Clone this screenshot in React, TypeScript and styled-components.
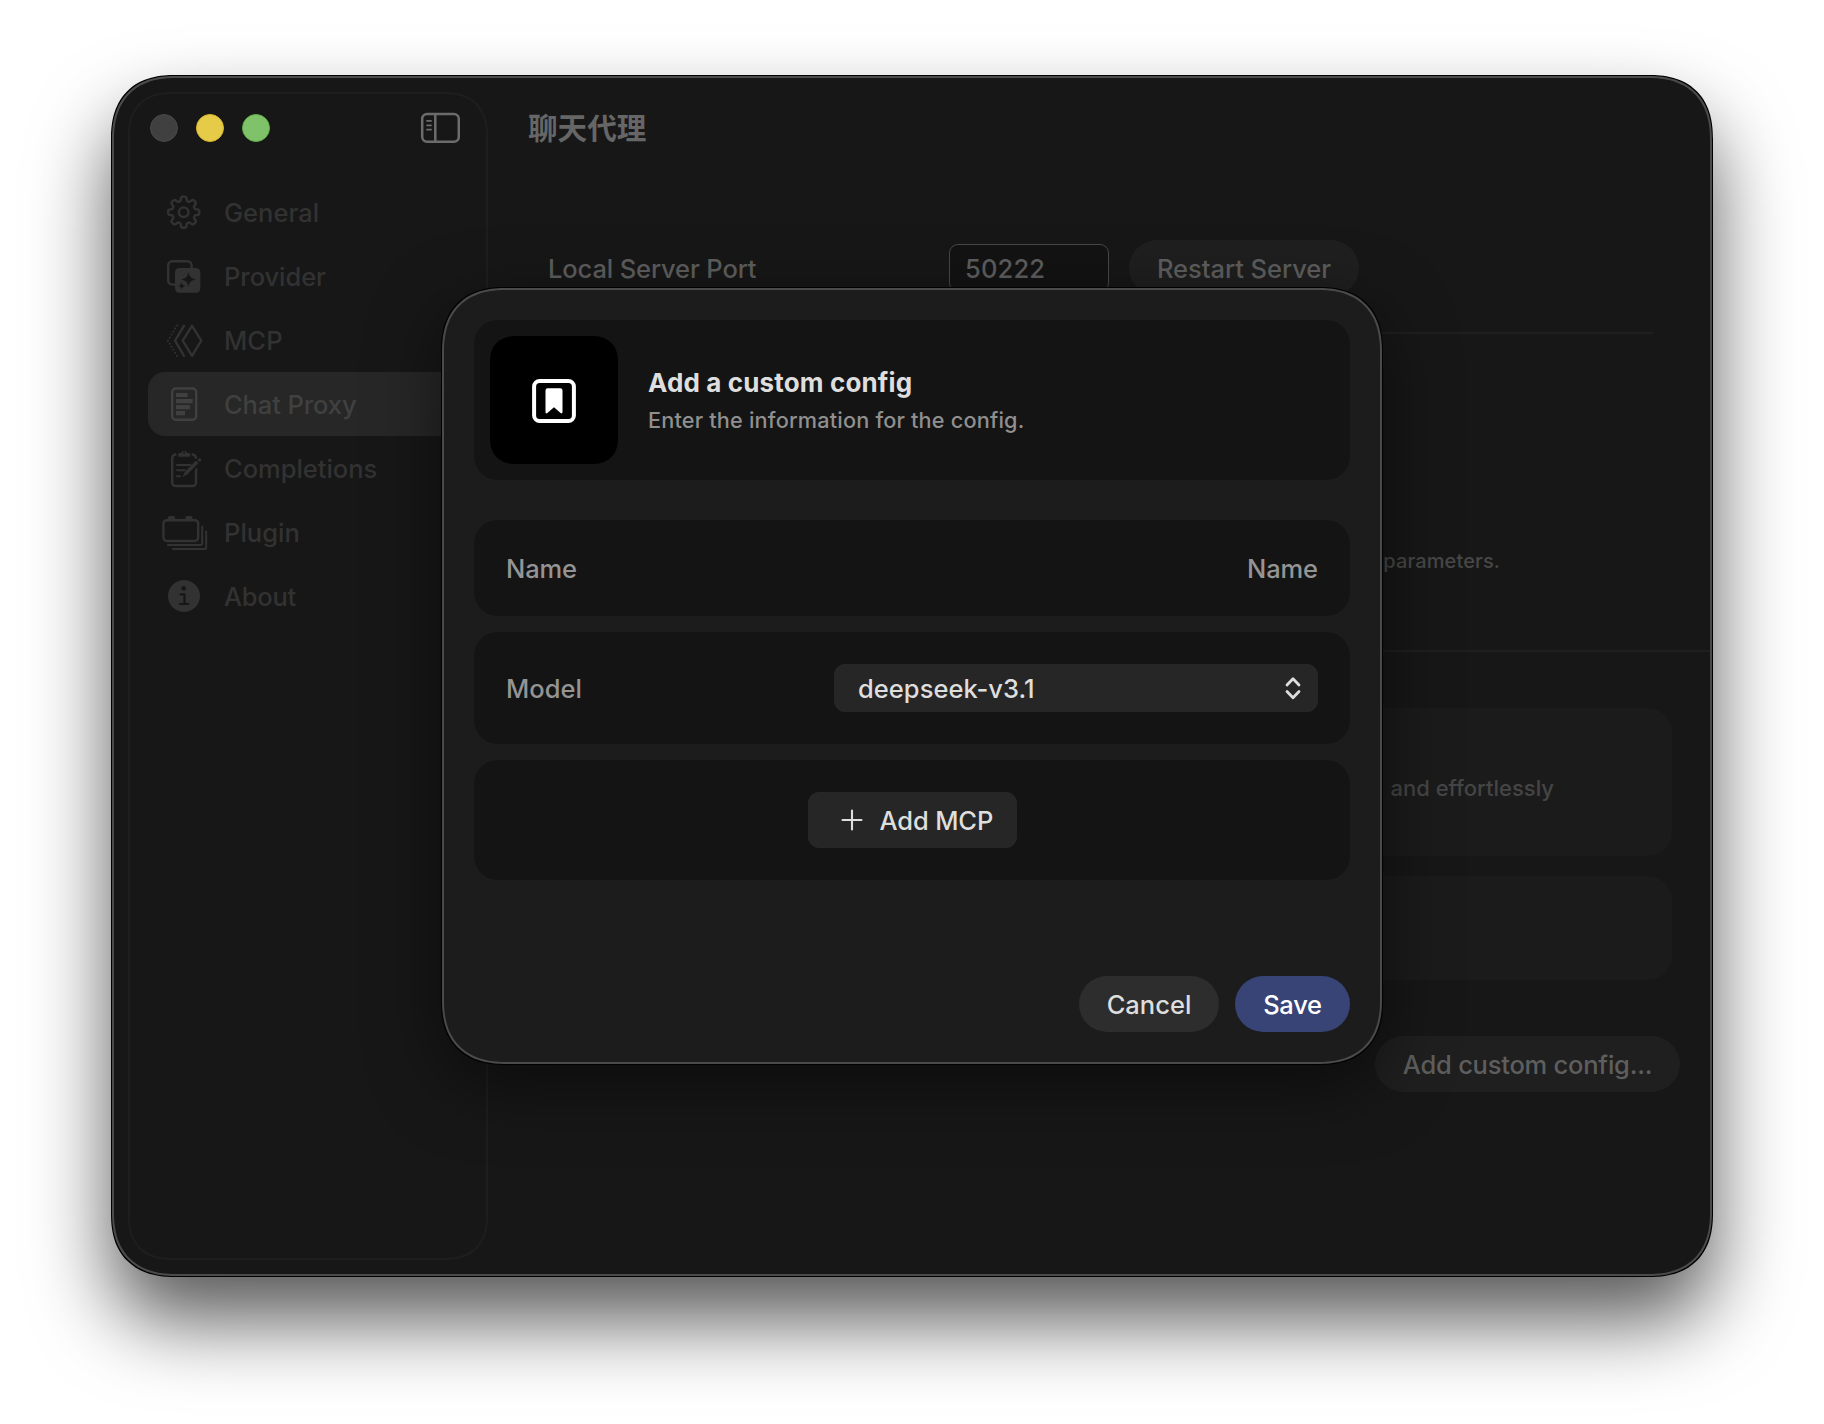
import React from 'react';
import styled, { createGlobalStyle, css } from 'styled-components';

const sans = `Inter, "Noto Sans CJK SC", "Liberation Sans", sans-serif`;

const GlobalStyle = createGlobalStyle`
  *, *::before, *::after { box-sizing: border-box; }
  body { margin: 0; background: #fff; font: 500 25.5px ${sans}; }
`;

const Desktop = styled.div`
  width: 1824px;
  height: 1424px;
  padding: 76px 112px;
  overflow: hidden;
  background: #fff;
`;

const Window = styled.div`
  position: relative;
  display: flex;
  width: 1600px;
  height: 1200px;
  border: 2px solid #4b4b4b;
  border-radius: 64px;
  corner-shape: superellipse(1.25);
  background: #171717;
  box-shadow: 0 0 0 1px #000, 0 44px 80px rgba(0, 0, 0, 0.66);
`;

const Sidebar = styled.aside`
  flex: none;
  width: 360px;
  margin: 14px 0 14px 14px;
  padding: 20px 18px;
  border: 2px solid #1e1e1e;
  border-radius: 44px;
  corner-shape: superellipse(1.25);
`;

const SidebarHeader = styled.div`
  display: flex;
  align-items: center;
  gap: 18px;
  height: 28px;
  padding: 0 8px 0 2px;
  margin-bottom: 38px;
`;

const Light = styled.span<{ $fill: string; $edge: string }>`
  width: 28px;
  height: 28px;
  border-radius: 50%;
  background: ${(p) => p.$fill};
  border: 1px solid ${(p) => p.$edge};
`;

const SidebarToggle = styled.svg`
  display: block;
  width: 40px;
  height: 32px;
  margin-left: auto;
  color: #6c6c6c;
`;

const NavItem = styled.div<{ $active?: boolean }>`
  display: flex;
  align-items: center;
  gap: 16px;
  height: 64px;
  padding-left: 12px;
  border-radius: 17px;
  color: #323232;
  --surface: #171717;
  ${(p) =>
    p.$active &&
    css`
      background: #272727;
      color: #404040;
      --surface: #272727;
    `}
`;

const NavIcon = styled.svg`
  display: block;
  flex: none;
  width: 48px;
  height: 40px;
  overflow: visible;
`;

const Txt = styled.span<{ $ls?: number }>`
  white-space: nowrap;
  letter-spacing: ${(p) => p.$ls ?? 0}px;
`;

const Main = styled.main`
  flex: 1;
  min-width: 0;
  display: flex;
  flex-direction: column;
`;

const Toolbar = styled.header`
  display: flex;
  align-items: center;
  height: 100px;
  padding: 0 0 2px 40px;
  font: 700 29.6px/1 "Noto Sans CJK SC", sans-serif;
  color: #666;
`;

const ServerRow = styled.div`
  display: flex;
  align-items: center;
  height: 56px;
  margin: 62px 0 36px 60px;
  color: #5e5e5e;
`;

const ServerLabel = styled.div`
  width: 401px;
`;

const PortField = styled.div`
  display: flex;
  align-items: center;
  width: 160px;
  height: 48px;
  margin-right: 20px;
  padding-left: 15px;
  border: 1px solid #484848;
  border-radius: 9px;
  background: #131313;
`;

const Pill = styled.button<{ $w: number; $bg: string; $fg: string }>`
  display: flex;
  align-items: center;
  justify-content: center;
  width: ${(p) => p.$w}px;
  height: 56px;
  padding: 0;
  border: 0;
  border-radius: 28px;
  background: ${(p) => p.$bg};
  color: ${(p) => p.$fg};
  font: inherit;
`;

const ShortRule = styled.hr`
  width: 1105px;
  height: 2px;
  margin: 0 0 0 60px;
  border: 0;
  background: #1f1f1f;
`;

const Hint = styled.p`
  display: flex;
  justify-content: flex-end;
  height: 28px;
  margin: 213px 210px 75px 0;
  line-height: 28px;
  font-size: 20px;
  color: #474747;
`;

const FullRule = styled(ShortRule)`
  width: auto;
  margin: 0;
`;

const Panels = styled.div`
  padding-top: 56px;
`;

const Panel = styled.section<{ $h: number }>`
  display: flex;
  align-items: center;
  justify-content: flex-end;
  height: ${(p) => p.$h}px;
  margin: 0 38px 20px 40px;
  padding: 12px 118px 0 0;
  border-radius: 24px;
  background: #1b1b1b;
  font-size: 22px;
  color: #454545;
`;

const MainFooter = styled.div`
  display: flex;
  justify-content: flex-end;
  padding: 36px 30px 0 0;
`;

const Backdrop = styled.div`
  position: absolute;
  inset: -2px;
  display: grid;
  place-items: center;
`;

const Dialog = styled.div`
  display: flex;
  flex-direction: column;
  width: 940px;
  height: 776px;
  padding: 30px;
  border: 2px solid #4a4a4a;
  border-radius: 64px;
  corner-shape: superellipse(1.25);
  background: #1c1c1c;
  box-shadow: 0 0 0 1px #000, 0 20px 70px rgba(0, 0, 0, 0.5);
  color: #949494;
`;

const DialogHeader = styled.header`
  display: flex;
  align-items: center;
  gap: 30px;
  height: 160px;
  margin-bottom: 40px;
  padding-left: 16px;
  border-radius: 24px;
  background: #141414;
`;

const AppIcon = styled.div`
  display: grid;
  place-items: center;
  width: 128px;
  height: 128px;
  padding-top: 1px;
  border-radius: 26px;
  corner-shape: superellipse(1.2);
  background: #000;
  color: #fff;
`;

const Heading = styled.div`
  display: flex;
  flex-direction: column;
  gap: 7px;
  padding-top: 1px;
`;

const Title = styled.h1`
  margin: 0;
  font-size: 26px;
  line-height: 32px;
  font-weight: 700;
  color: #dedede;
`;

const Subtitle = styled.p`
  margin: 0;
  font-size: 21.7px;
  line-height: 28px;
  color: #8f8f8f;
`;

const FieldRow = styled.div<{ $h: number; $center?: boolean }>`
  display: flex;
  align-items: center;
  justify-content: ${(p) => (p.$center ? 'center' : 'space-between')};
  height: ${(p) => p.$h}px;
  margin-bottom: 16px;
  padding: 0 32px;
  border-radius: 24px;
  background: #141414;
`;

const Select = styled.div`
  display: flex;
  align-items: center;
  justify-content: space-between;
  width: 484px;
  height: 48px;
  padding: 0 16px 0 24px;
  border-radius: 11px;
  background: #262626;
  color: #dedede;
`;

const AddButton = styled.button`
  display: flex;
  align-items: center;
  gap: 17px;
  width: 209px;
  height: 56px;
  padding: 0 0 0 33px;
  border: 0;
  border-radius: 11px;
  background: #262626;
  color: #dedede;
  font: inherit;
`;

const DialogActions = styled.footer`
  display: flex;
  justify-content: flex-end;
  gap: 16px;
  margin-top: auto;
`;

const gearPath = (() => {
  const points: string[] = [];
  for (let i = 0; i < 240; i++) {
    const a = (i / 240) * Math.PI * 2;
    const r = 13.5 + 2.1 * Math.tanh(2.2 * Math.cos(8 * a) + 0.3);
    points.push(`${(23.7 + r * Math.sin(a)).toFixed(2)} ${(20.2 - r * Math.cos(a)).toFixed(2)}`);
  }
  return `M${points.join('L')}Z`;
})();

const stroke = {
  fill: 'none',
  stroke: 'currentColor',
  strokeWidth: 2.4,
  strokeLinecap: 'round',
  strokeLinejoin: 'round',
} as const;

const icons: Record<string, React.ReactNode> = {
  General: (
    <g {...stroke}>
      <path d={gearPath} />
      <circle cx="23.7" cy="20.2" r="4.8" />
    </g>
  ),
  Provider: (
    <>
      <path {...stroke} strokeLinecap="butt" d="M16 28.6h-3.6a4.2 4.2 0 0 1-4.2-4.2V9.4a4.2 4.2 0 0 1 4.2-4.2h15a4.2 4.2 0 0 1 4.2 4.2V13" />
      <rect x="15" y="12" width="25.3" height="24.8" rx="4.2" fill="currentColor" />
      <path
        fill="var(--surface)"
        d="M28.5 15.8c.8 5 2.4 6.6 7.3 7.6c-4.9 1-6.5 2.6-7.3 7.6c-.8-5-2.4-6.6-7.3-7.6c4.9-1 6.5-2.6 7.3-7.6zM21.7 26c.5 2.6 1.3 3.4 3.8 3.9c-2.500.5-3.300 1.300-3.800 3.900c-.5-2.600-1.300-3.400-3.800-3.900c2.500-.5 3.300-1.300 3.800-3.900z"
      />
    </>
  ),
  MCP: (
    <g {...stroke}>
      <path d="M32 5.800l9.300 14.900L32 35.800L22.700 20.700z" />
      <path d="M24 5.800L15 20.700l9 15.100" />
      <path d="M17 5.500L7.900 20.700L17 36" strokeWidth="2" strokeDasharray="0 3.540" />
    </g>
  ),
  'Chat Proxy': (
    <>
      <rect {...stroke} x="12.200" y="4.500" width="24" height="31.300" rx="3.600" />
      <path fill="currentColor" d="M16 8.900h11.500v4.200H16zM16 15h16.700v4.200H16zM16 21h14v4.200H16zM16 27.100h9v4.200H16z" />
    </>
  ),
  Completions: (
    <>
      <path {...stroke} d="M15.500 6.500a3.500 3.500 0 0 0-3.300 3.600v24.600a3.300 3.300 0 0 0 3.300 3.300h17.200a3.300 3.300 0 0 0 3.300-3.300V20M32.600 6.500c1.900.3 3 1.400 3.300 3.300" />
      <path {...stroke} strokeWidth={1.900} d="M17 17h13.500M17 22.300h8M17 28.300h3" />
      <path fill="currentColor" d="M18.200 6.500a1.500 1.500 0 0 1 1.500-1.500h1.500a3.100 3.100 0 0 1 6 0h1.500a1.500 1.500 0 0 1 1.500 1.500v2.300h-12z" />
      <circle cx="24.200" cy="4.500" r="1.100" fill="var(--surface)" />
      <path d="M24.500 28L41 11.500" stroke="var(--surface)" strokeWidth="5.600" />
      <path fill="currentColor" d="M35.900 12.500l2.600 2.600L27.300 26.500l-5 2.700l2.500-5.200zM38.200 10.900a1.600 1.600 0 1 1 2.600 2.200l-1 1l-2.400-2.200z" />
    </>
  ),
  Plugin: (
    <>
      <rect {...stroke} x="3.400" y="8.200" width="34.800" height="20.800" rx="3.400" />
      <path fill="currentColor" d="M8 7.500V5.500a1.500 1.500 0 0 1 1.500-1.500h4a1.500 1.500 0 0 1 1.500 1.500v2zM25.500 7.500V5.500a1.500 1.500 0 0 1 1.500-1.500h4a1.500 1.500 0 0 1 1.500 1.500v2z" />
      <path {...stroke} strokeWidth={2} d="M42.200 14.500v17a1.500 1.500 0 0 1-1.500 1.500H8M46.200 19.500v16a1.500 1.500 0 0 1-1.500 1.500H13" />
    </>
  ),
  About: (
    <>
      <circle cx="24" cy="20" r="16" fill="currentColor" />
      <circle cx="23.700" cy="12.300" r="2.300" fill="var(--surface)" />
      <path d="M20.500 18.300h4v9.600M20 28h8.400" fill="none" stroke="var(--surface)" strokeWidth="2.200" strokeLinecap="round" strokeLinejoin="round" />
    </>
  ),
};

const navItems = [
  { name: 'General', ls: 0.03 },
  { name: 'Provider', ls: -0.05 },
  { name: 'MCP', ls: 0.1 },
  { name: 'Chat Proxy', ls: -0.09 },
  { name: 'Completions', ls: -0.03 },
  { name: 'Plugin', ls: 0.03 },
  { name: 'About', ls: -0.25 },
];

export default function App() {
  return (
    <>
      <GlobalStyle />
      <Desktop>
        <Window>
          <Sidebar>
            <SidebarHeader>
              <Light $fill="#404040" $edge="#484848" />
              <Light $fill="#e6cb49" $edge="#d9b62c" />
              <Light $fill="#80c26a" $edge="#62b246" />
              <SidebarToggle viewBox="0 0 40 32" fill="none" stroke="currentColor" strokeWidth="2.5">
                <rect x="2.200" y="2" width="36.600" height="27.800" rx="5" />
                <path d="M15.300 2v27.800" />
                <path d="M7 8.900h4M7 13.300h4M7 17.700h4" strokeWidth="1.800" strokeLinecap="round" />
              </SidebarToggle>
            </SidebarHeader>
            {navItems.map(({ name, ls }) => (
              <NavItem key={name} $active={name === 'Chat Proxy'}>
                <NavIcon viewBox="0 0 48 40">{icons[name]}</NavIcon>
                <Txt $ls={ls}>{name}</Txt>
              </NavItem>
            ))}
          </Sidebar>
          <Main>
            <Toolbar>
              <Txt>聊天代理</Txt>
            </Toolbar>
            <ServerRow>
              <ServerLabel>
                <Txt $ls={-0.13}>Local Server Port</Txt>
              </ServerLabel>
              <PortField>
                <Txt $ls={0.15}>50222</Txt>
              </PortField>
              <Pill $w={230} $bg="#1f1f1f" $fg="#5e5e5e">
                <Txt $ls={-0.04}>Restart Server</Txt>
              </Pill>
            </ServerRow>
            <ShortRule />
            <Hint>
              <Txt $ls={0.13}>parameters.</Txt>
            </Hint>
            <FullRule />
            <Panels>
              <Panel $h={148}>
                <Txt>and effortlessly</Txt>
              </Panel>
              <Panel $h={104} />
            </Panels>
            <MainFooter>
              <Pill $w={305} $bg="#1f1f1f" $fg="#5e5e5e">
                <Txt $ls={-0.23}>Add custom config...</Txt>
              </Pill>
            </MainFooter>
          </Main>
          <Backdrop>
            <Dialog>
              <DialogHeader>
                <AppIcon>
                  <svg width="44" height="44" viewBox="0 0 44 44">
                    <rect x="2.100" y="2.100" width="39.800" height="39.800" rx="5.500" fill="none" stroke="currentColor" strokeWidth="4" />
                    <path fill="currentColor" d="M13.500 11.500a2.200 2.200 0 0 1 2.200-2.200h12.600a2.200 2.200 0 0 1 2.200 2.200v21.600c0 1.400-1 1.800-1.900.9L22 28.200L15.400 34c-.9.900-1.900.5-1.900-.9z" />
                  </svg>
                </AppIcon>
                <Heading>
                  <Title>
                    <Txt $ls={0.14}>Add a custom config</Txt>
                  </Title>
                  <Subtitle>
                    <Txt $ls={0.18}>Enter the information for the config.</Txt>
                  </Subtitle>
                </Heading>
              </DialogHeader>
              <FieldRow $h={96}>
                <Txt $ls={-0.1}>Name</Txt>
                <Txt $ls={-0.1}>Name</Txt>
              </FieldRow>
              <FieldRow $h={112}>
                <Txt>Model</Txt>
                <Select>
                  <Txt $ls={0.04}>deepseek-v3.1</Txt>
                  <svg width="18" height="24" viewBox="0 0 18 24" fill="none" stroke="currentColor" strokeWidth="2.8" strokeLinecap="round" strokeLinejoin="round">
                    <path d="M3 9l6-6.200L15 9M3 15.500l6 6.200l6-6.200" />
                  </svg>
                </Select>
              </FieldRow>
              <FieldRow $h={120} $center>
                <AddButton>
                  <svg width="22" height="22" viewBox="0 0 22 22" stroke="currentColor" strokeWidth="2.1" strokeLinecap="round">
                    <path d="M11 1.500v19M1.500 11h19" />
                  </svg>
                  <Txt $ls={-0.13}>Add MCP</Txt>
                </AddButton>
              </FieldRow>
              <DialogActions>
                <Pill $w={140} $bg="#2d2d2d" $fg="#dedede">
                  <Txt>Cancel</Txt>
                </Pill>
                <Pill $w={115} $bg="#384376" $fg="#fff">
                  <Txt $ls={-0.25}>Save</Txt>
                </Pill>
              </DialogActions>
            </Dialog>
          </Backdrop>
        </Window>
      </Desktop>
    </>
  );
}
